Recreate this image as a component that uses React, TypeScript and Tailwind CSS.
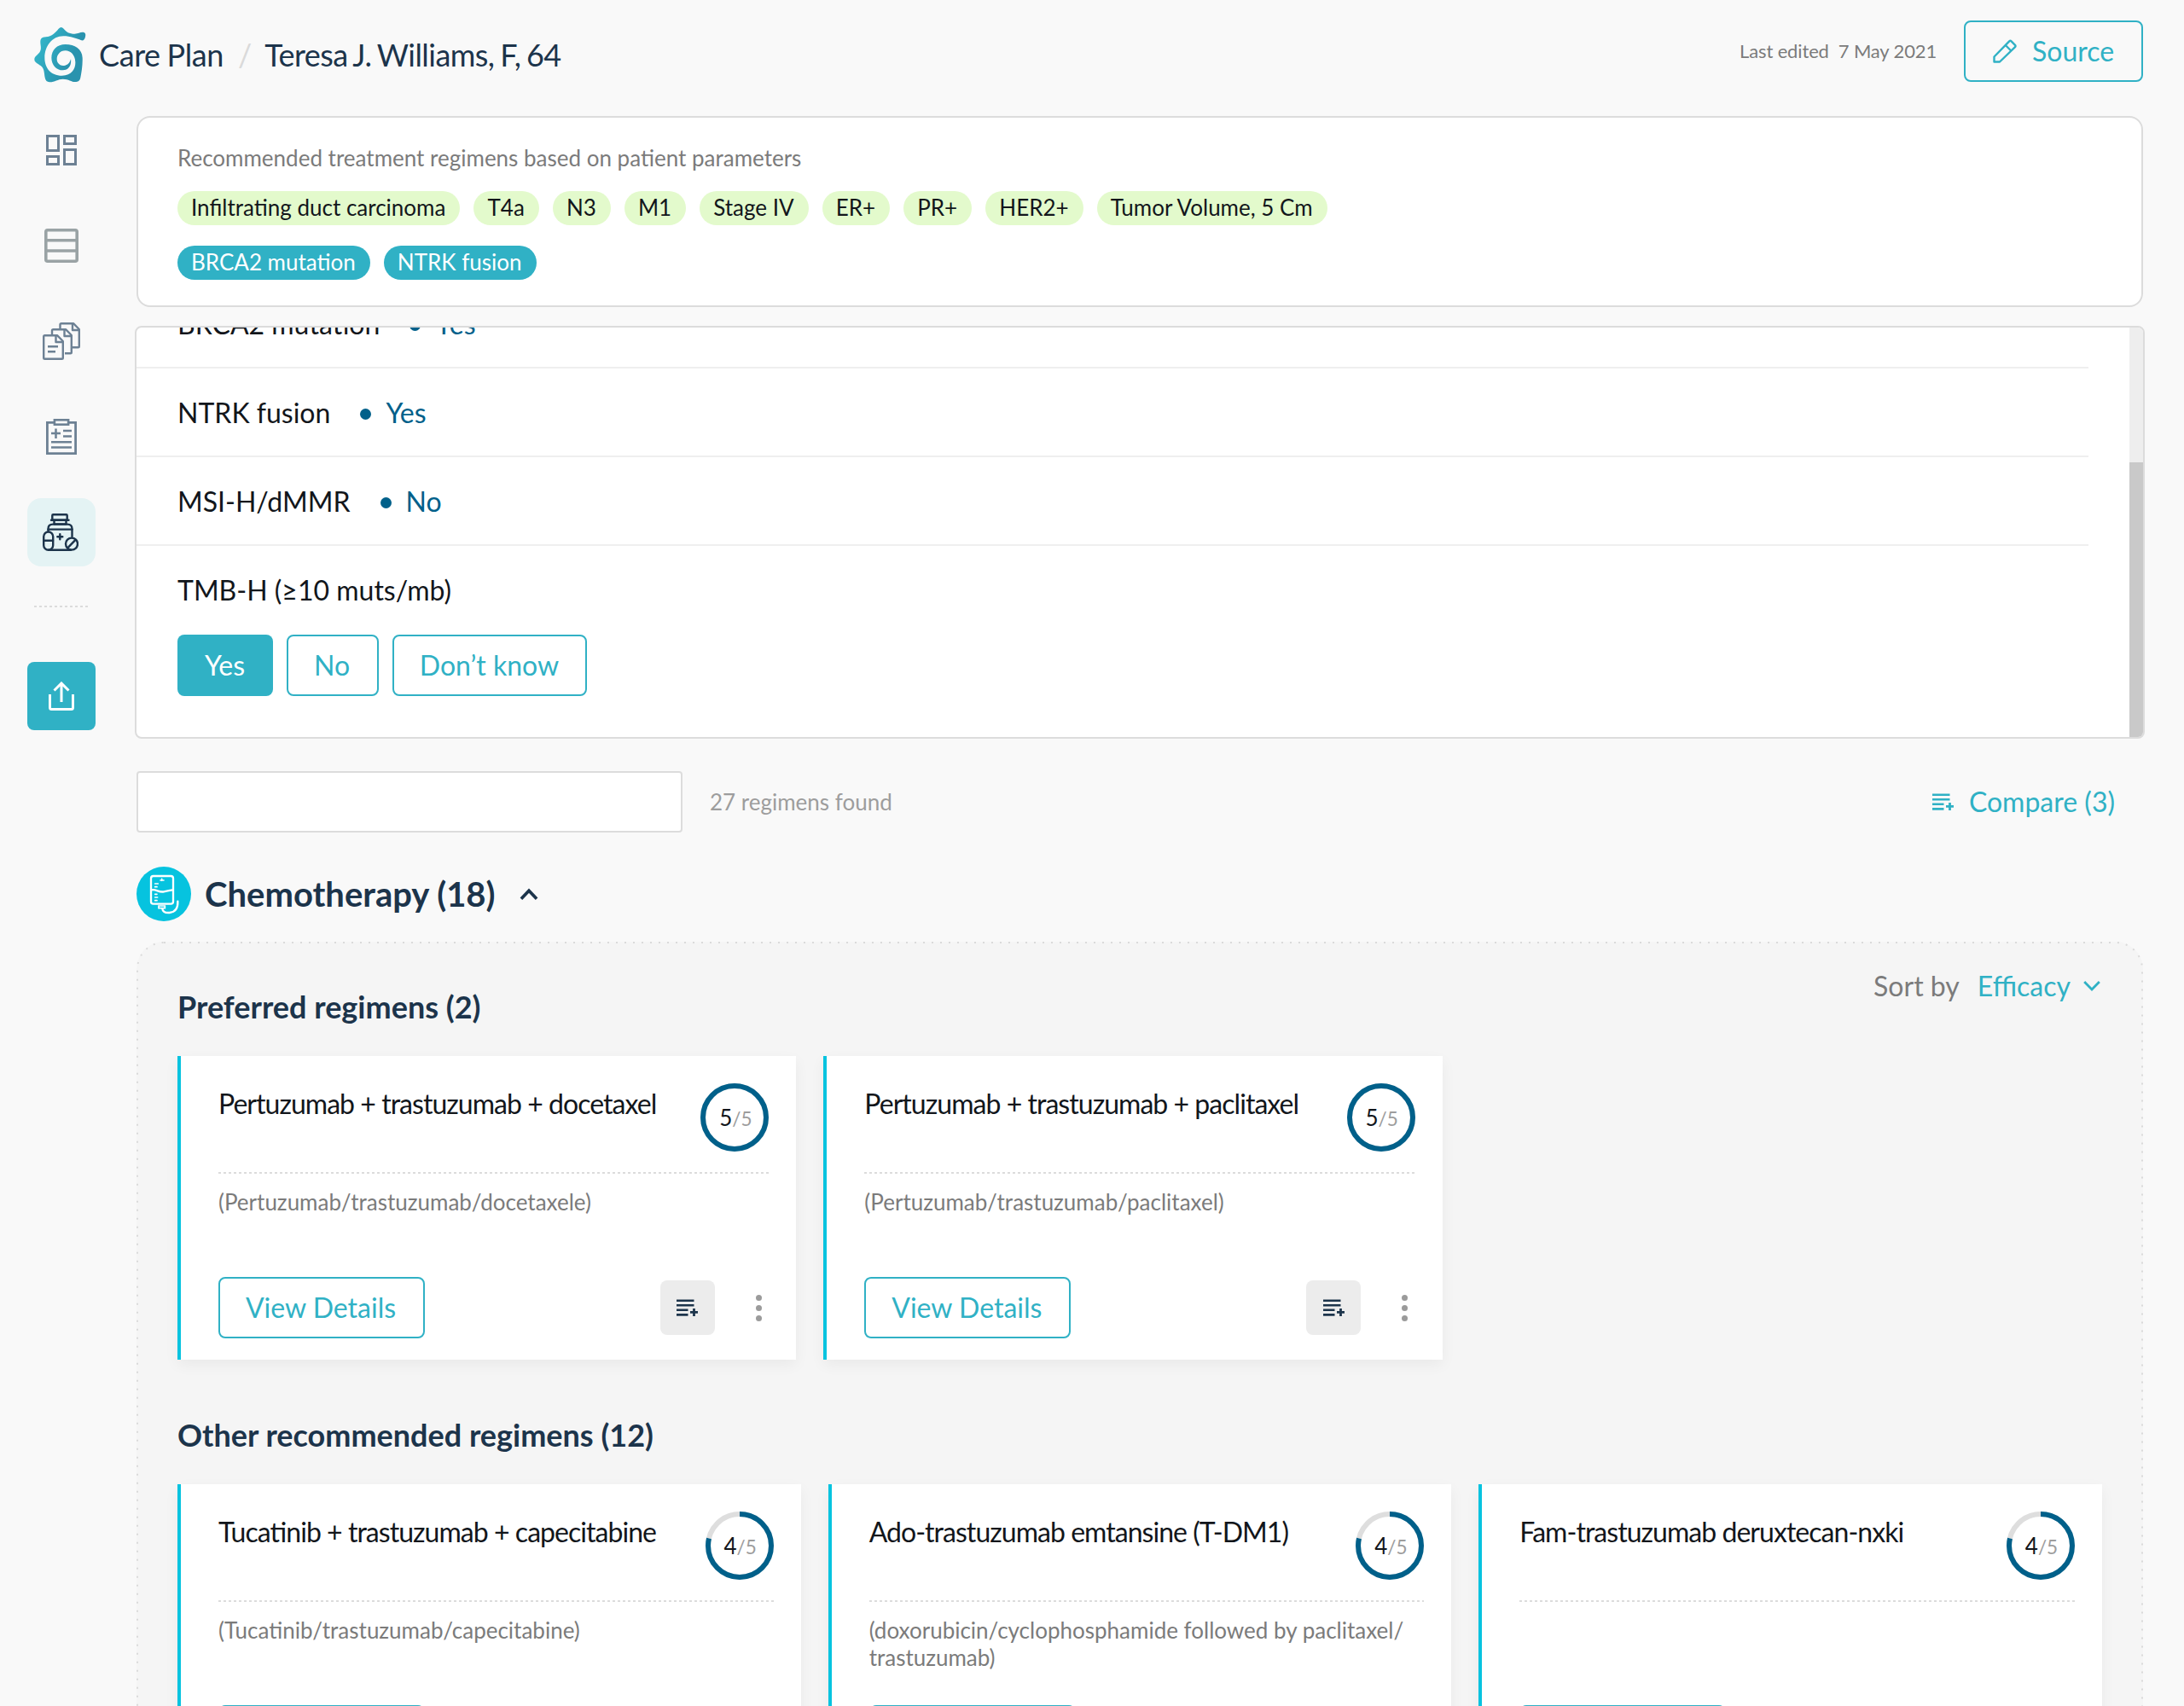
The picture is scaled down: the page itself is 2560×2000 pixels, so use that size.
import React from "react";

const TEAL = "#30b1c5";

function Logo() {
  return (
    <svg className="h-[66px] w-[62px]" viewBox="18 20 184 198">
      <defs>
        <linearGradient id="logoFill" x1="0" y1="0" x2="1" y2="0.5">
          <stop offset="0.2" stopColor="#33b3c7" />
          <stop offset="0.8" stopColor="#2a93ae" />
        </linearGradient>
      </defs>
      <path
        fill="url(#logoFill)"
        d="M103 28Q112 18 121 28C130 39 140 46 160 46C172 46 182 38 192 41C199 44 198 50 197 56C195 66 190 71 183 69C165 62 145 54 120 54C80 54 54 90 54 130C54 165 75 193 115 193C150 193 163 167 162 145C161 120 145 105 127 105C108 105 97 120 97 135C97 150 110 160 122 158C135 156 143 148 146 134C149 155 140 174 118 174C95 174 78 155 78 130C78 103 97 83 127 83C160 83 186 100 187 130C188 155 184 180 180 200Q178 214 165 215C150 217 140 205 118 205C100 205 90 216 72 216C58 216 56 205 54 195C52 175 50 165 40 158C30 150 18 146 18 136C18 124 32 120 38 108C44 95 38 85 39 72C40 60 48 58 58 57C80 54 92 42 103 28Z"
      />
    </svg>
  );
}

function GridIcon() {
  return (
    <svg className="h-9 w-9" viewBox="0 0 36 36" fill="none" stroke="#6d8194" strokeWidth="3">
      <rect x="1.5" y="1.5" width="13" height="17" />
      <rect x="21.5" y="1.5" width="13" height="9" />
      <rect x="1.5" y="25.5" width="13" height="9" />
      <rect x="21.5" y="17.5" width="13" height="17" />
    </svg>
  );
}

function RowsIcon() {
  return (
    <svg className="h-10 w-10" viewBox="0 0 40 40" fill="none" stroke="#9aa3a5" strokeWidth="3.6">
      <rect x="1.8" y="1.8" width="36.4" height="36.4" rx="2" />
      <path d="M2 13.8H38M2 26H38" />
    </svg>
  );
}

function FilesIcon() {
  return (
    <svg className="h-11 w-11" viewBox="0 0 44 44" fill="none" stroke="#6d8194" strokeWidth="2.4" strokeLinejoin="round">
      <path d="M20.5 7V2.5Q20.5 1.2 22 1.2H36L42.8 8V28Q42.8 29.3 41.5 29.3H35" />
      <path d="M35 1.5V9H42.5" />
      <path d="M11 14V9.5Q11 8.2 12.5 8.2H27L33.8 15V35Q33.8 36.3 32.5 36.3H26" />
      <path d="M25.5 8.5V16H33.5" />
      <path d="M2.5 15.2H17L23.8 22V41.5Q23.8 42.8 22.5 42.8H2.5Q1.2 42.8 1.2 41.5V16.5Q1.2 15.2 2.5 15.2Z" />
      <path d="M15.5 15.5V23H23.5" />
      <path d="M6 28.2H18M6 34.2H15" />
    </svg>
  );
}

function ClipboardIcon() {
  return (
    <svg className="h-[42px] w-9" viewBox="0 0 36 42" fill="none" stroke="#6d8194" strokeWidth="2.8">
      <path d="M9 4.4H1.4V40.6H34.6V4.4H27" />
      <rect x="9.9" y="1.3" width="16.2" height="5.4" strokeWidth="2.6" />
      <path d="M6 17H17M11.5 11.5V23M20 14H30M20 20.5H30M6 27.2H30M6 33.5H30" strokeWidth="2.5" />
    </svg>
  );
}

function BottleIcon() {
  return (
    <svg className="h-11 w-[42px]" viewBox="0 0 42 44" fill="none" stroke="#1c344b" strokeWidth="2.4" strokeLinejoin="round" strokeLinecap="round">
      <rect x="11.3" y="1.3" width="17.4" height="6.4" rx="1" />
      <path d="M10 7.7H30.5M13.5 8V12.5H27.5V8" />
      <path d="M6.5 21V18Q6.5 12.6 12 12.6H29Q34.5 12.6 34.5 18V27" />
      <path d="M6.5 18.6H34.5" />
      <rect x="1.2" y="21.5" width="11" height="21.3" rx="5.5" />
      <path d="M1.5 31.8H12" />
      <path d="M7 42.8H33" />
      <path d="M20.3 24.3V30.3M17.3 27.3H23.3" />
      <circle cx="34" cy="35.6" r="7" />
      <path d="M30 39.6L38 31.4" />
    </svg>
  );
}

function ShareIcon() {
  return (
    <svg className="h-[34px] w-[30px]" viewBox="0 0 30 34" fill="none" stroke="#fff" strokeWidth="3">
      <path d="M1.5 15V30.5Q1.5 32.5 3.5 32.5H26.5Q28.5 32.5 28.5 30.5V15" />
      <path d="M15 24V2.5M6.5 10.5L15 2L23.5 10.5" />
    </svg>
  );
}

function PencilIcon() {
  return (
    <svg className="h-[28px] w-[28px]" viewBox="0 0 28 28" fill="none" stroke={TEAL} strokeWidth="2.4" strokeLinejoin="round">
      <path d="M1.5 26.5V20.5L19.2 2.3Q20.4 1.2 21.6 2.3L26 6.8Q27 8 26 9.2L8 26.5Z" />
      <path d="M14.8 7L21.3 13.5" />
    </svg>
  );
}

function ListPlusIcon({ color }: { color: string }) {
  return (
    <svg className="h-[21px] w-[25px]" viewBox="0 0 25 21" fill="none" stroke={color} strokeWidth="2.6">
      <path d="M0 1.8H20.5M0 7.2H20.5M0 12.8H13.5M0 18.4H13.5" />
      <path d="M16 15.4H25M20.5 11V20" strokeWidth="2.8" />
    </svg>
  );
}

function DripIcon() {
  return (
    <svg className="h-16 w-16" viewBox="0 0 192 192">
      <circle cx="96" cy="96" r="96" fill="#06c3df" />
      <g fill="none" stroke="#fff" strokeWidth="7" strokeLinecap="round">
        <rect x="51" y="33" width="78" height="98" rx="8" />
        <path d="M53 82C70 78 78 92 96 88C110 85 116 84 126 82" />
        <path d="M65 60H76M65 71H72M65 97H72M65 108H74M65 119H72" strokeWidth="5" />
        <path d="M89 43V49M84 48H96" strokeWidth="5" />
        <path d="M78 138H100V146H78Z" strokeWidth="5" />
        <path d="M91 148C92 158 100 163 116 162C138 160 146 145 145 122" />
      </g>
    </svg>
  );
}

function Chevron({ up, color, className }: { up?: boolean; color: string; className: string }) {
  return (
    <svg className={className} viewBox="0 0 20 14" fill="none" stroke={color} strokeWidth={up ? 3.4 : 2.8}>
      <path d={up ? "M1.5 12L10 3L18.5 12" : "M1.2 2L10 11L18.8 2"} />
    </svg>
  );
}

function Dots({ className }: { className: string }) {
  return (
    <div
      className={`h-[2px] bg-[repeating-linear-gradient(90deg,#dcdcdc_0px,#dcdcdc_3px,transparent_3px,transparent_6px)] ${className}`}
    />
  );
}

function Ring({ score }: { score: number }) {
  const c = 2 * Math.PI * 37;
  return (
    <div className="relative flex size-20 shrink-0 items-center justify-center">
      <svg className="absolute inset-0 size-20 -rotate-90" viewBox="0 0 80 80" fill="none" strokeWidth="6">
        <circle cx="40" cy="40" r="37" stroke="#dedede" />
        <circle cx="40" cy="40" r="37" stroke="#00608a" strokeDasharray={`${(c * (score === 5 ? 5 : 3.93)) / 5} ${c}`} />
      </svg>
      <span className="relative flex items-baseline pl-[2px] text-[26px] leading-none text-[#12161b]">
        {score}
        <span className="text-[22.5px] text-[#9d9d9d]">/5</span>
      </span>
    </div>
  );
}

function RegimenCard({ title, note, score, width }: { title: string; note?: string; score: number; width: string }) {
  return (
    <div
      className={`flex h-[356px] shrink-0 flex-col border-l-4 border-[#06c3df] bg-white pl-11 pr-8 pt-8 shadow-[0_6px_16px_rgba(0,0,0,0.05)] ${width}`}
    >
      <div className="flex h-[104px] justify-between">
        <h3 className="whitespace-nowrap pt-1 text-[32px] leading-[40px] tracking-[-0.96px] text-[#12161b] [font-feature-settings:'liga']">{title}</h3>
        <Ring score={score} />
      </div>
      <Dots className="w-full" />
      <p className="mt-[17px] h-[104px] text-[26px] leading-8 text-[#7b7b7b]">{note}</p>
      <div className="flex h-[72px] shrink-0 items-center">
        <button className="h-[72px] w-[242px] rounded-lg border-2 border-[#30b1c5] pr-[2px] text-[32px] leading-none text-[#30b1c5]">
          View Details
        </button>
        <button className="ml-auto flex size-16 items-center justify-center rounded-lg bg-[#ececec]">
          <ListPlusIcon color="#1c344b" />
        </button>
        <div className="ml-12 mr-[8.4px] flex w-[7px] flex-col gap-[5px]">
          <span className="size-[7px] rounded-full bg-[#9b9b9b]" />
          <span className="size-[7px] rounded-full bg-[#9b9b9b]" />
          <span className="size-[7px] rounded-full bg-[#9b9b9b]" />
        </div>
      </div>
    </div>
  );
}

function BiomarkerRow({ label, value }: { label: string; value: string }) {
  return (
    <div className="flex h-[104px] w-[2288px] items-center border-b-2 border-[#efefef] pl-12 pt-[2px] text-[32px] leading-10 text-[#12161b]">
      <span>{label}</span>
      <span className="ml-[35px] mt-[3px] size-[13px] rounded-full bg-[#00608a]" />
      <span className="ml-[17px] text-[#00608a]">{value}</span>
    </div>
  );
}

const greenTags = ["Infiltrating duct carcinoma", "T4a", "N3", "M1", "Stage IV", "ER+", "PR+", "HER2+", "Tumor Volume, 5 Cm"];
const tealTags = ["BRCA2 mutation", "NTRK fusion"];

export default function App() {
  return (
    <div className="flex h-[2000px] w-[2560px] overflow-hidden bg-[#f9f9f9] font-['Lato',sans-serif]">
      <aside className="flex w-[158px] shrink-0 flex-col">
        <div className="flex h-[136px] pl-10 pt-[31px]">
          <Logo />
        </div>
        <nav className="flex w-[144px] flex-col items-center">
          <div className="flex h-20 items-center"><GridIcon /></div>
          <div className="mt-8 flex h-20 items-center"><RowsIcon /></div>
          <div className="mt-8 flex h-20 items-center"><FilesIcon /></div>
          <div className="mt-8 flex h-20 items-center"><ClipboardIcon /></div>
          <div className="mt-8 flex size-20 items-center justify-center rounded-2xl bg-[#e4f3f4] pr-[2px]"><BottleIcon /></div>
          <Dots className="mt-[46px] w-16" />
          <button className="mt-16 flex size-20 items-center justify-center rounded-lg bg-[#30b1c5]"><ShareIcon /></button>
        </nav>
      </aside>

      <main className="-ml-[42px] w-[2444px] shrink-0">
        <header className="flex h-[136px] items-start pt-6">
          <div className="flex items-baseline whitespace-nowrap pt-[18px] text-[36px] leading-[44px] text-[#1c344b]">
            <span className="tracking-[-0.4px] [word-spacing:-1px]">Care Plan</span>
            <span className="ml-[17px] mr-[15px] text-[#dadada]">/</span>
            <span className="tracking-[-0.55px] [word-spacing:-2px]">Teresa J. Williams, F, 64</span>
          </div>
          <div className="ml-auto mr-8 mt-6 whitespace-pre text-[22px] leading-6 tracking-[-0.14px] text-[#7b7b7b]">Last edited  7 May 2021</div>
          <button className="mr-[48px] flex h-[72px] w-[210px] items-center rounded-lg border-2 border-[#30b1c5] pl-8 text-[32px] leading-none text-[#30b1c5]">
            <PencilIcon />
            <span className="ml-[18px]">Source</span>
          </button>
        </header>

        <section className="ml-11 h-[224px] w-[2352px] rounded-2xl border-2 border-[#dcdcdc] bg-white pl-[46px] pt-[31px]">
          <p className="text-[26px] leading-8 text-[#7b7b7b]">Recommended treatment regimens based on patient parameters</p>
          <div className="mt-[23px] flex gap-4">
            {greenTags.map((t) => (
              <span key={t} className="h-10 rounded-full bg-[#e3facc] pl-4 pr-[17.1px] text-[26px] leading-[39px] text-[#12161b]">{t}</span>
            ))}
          </div>
          <div className="mt-6 flex gap-4">
            {tealTags.map((t) => (
              <span key={t} className="h-10 rounded-full bg-[#30b1c5] pl-4 pr-[17px] text-[26px] leading-[39px] text-white">{t}</span>
            ))}
          </div>
        </section>

        <section className="ml-[42px] mt-[22px] flex h-[484px] w-[2356px] overflow-hidden rounded-lg border-2 border-[#dcdcdc] bg-white">
          <div className="-mt-[56px] w-[2336px] shrink-0">
            <BiomarkerRow label="BRCA2 mutation" value="Yes" />
            <BiomarkerRow label="NTRK fusion" value="Yes" />
            <BiomarkerRow label="MSI-H/dMMR" value="No" />
            <div className="pl-12 pt-8 text-[32px] leading-10 text-[#12161b]">TMB-H (≥10 muts/mb)</div>
            <div className="mt-8 flex gap-4 pl-12 text-[32px] leading-none text-[#30b1c5]">
              <button className="h-[72px] w-28 rounded-lg bg-[#30b1c5] pr-[1px] text-white">Yes</button>
              <button className="h-[72px] w-[108px] rounded-lg border-2 border-[#30b1c5] pr-[2px]">No</button>
              <button className="h-[72px] w-[228px] rounded-lg border-2 border-[#30b1c5] pr-[1px]">Don’t know</button>
            </div>
          </div>
          <div className="flex w-4 flex-col justify-end bg-[#eeeeee]">
            <div className="h-[322px] bg-[#c9c9c9]" />
          </div>
        </section>

        <div className="ml-11 mt-[38px] flex h-[72px] w-[2352px] items-center">
          <input className="h-[72px] w-[640px] rounded border-2 border-[#dcdcdc] bg-white" aria-label="Filter regimens" />
          <span className="ml-8 text-[26px] leading-8 text-[#9d9d9d]">27 regimens found</span>
          <button className="ml-auto mr-[33px] flex items-center text-[32px] leading-10 text-[#30b1c5]">
            <ListPlusIcon color={TEAL} />
            <span className="ml-[18px]">Compare (3)</span>
          </button>
        </div>

        <div className="ml-11 mt-10 flex h-16 items-center">
          <DripIcon />
          <h1 className="ml-4 text-[40px] font-bold leading-[48px] text-[#1c344b]">Chemotherapy (18)</h1>
          <Chevron up color="#1c344b" className="ml-7 h-[15px] w-[22px]" />
        </div>

        <section className="relative ml-11 mt-6 h-[1200px] w-[2352px] rounded-[32px] bg-[#f5f5f5] pl-12">
          <svg className="pointer-events-none absolute inset-0" width="2352" height="1200" fill="none">
            <rect x="1" y="1" width="2350" height="1198" rx="31" stroke="#dadada" strokeWidth="2" strokeDasharray="2 8" />
          </svg>
          <div className="flex h-[134px] w-[2256px] items-start justify-between">
            <h2 className="pt-[54px] text-[36px] font-bold leading-[44px] text-[#1c344b]">Preferred regimens (2)</h2>
            <div className="mt-8 flex h-10 items-center text-[32px] leading-10 text-[#7b7b7b]">
              <span>Sort by</span>
              <span className="ml-[21px] text-[#30b1c5]">Efficacy</span>
              <Chevron color={TEAL} className="ml-[15px] mr-[2px] h-[14px] w-5" />
            </div>
          </div>
          <div className="flex gap-8">
            <RegimenCard width="w-[725.33px]" score={5} title="Pertuzumab + trastuzumab + docetaxel" note="(Pertuzumab/trastuzumab/docetaxele)" />
            <RegimenCard width="w-[725.33px]" score={5} title="Pertuzumab + trastuzumab + paclitaxel" note="(Pertuzumab/trastuzumab/paclitaxel)" />
          </div>
          <h2 className="h-[146px] pt-[66px] text-[36px] font-bold leading-[44px] text-[#1c344b]">Other recommended regimens (12)</h2>
          <div className="flex gap-8">
            <RegimenCard width="w-[730.67px]" score={4} title="Tucatinib + trastuzumab + capecitabine" note="(Tucatinib/trastuzumab/capecitabine)" />
            <RegimenCard width="w-[730.67px]" score={4} title="Ado-trastuzumab emtansine (T-DM1)" note="(doxorubicin/cyclophosphamide followed by paclitaxel/ trastuzumab)" />
            <RegimenCard width="w-[730.67px]" score={4} title="Fam-trastuzumab deruxtecan-nxki" />
          </div>
        </section>
      </main>
    </div>
  );
}
